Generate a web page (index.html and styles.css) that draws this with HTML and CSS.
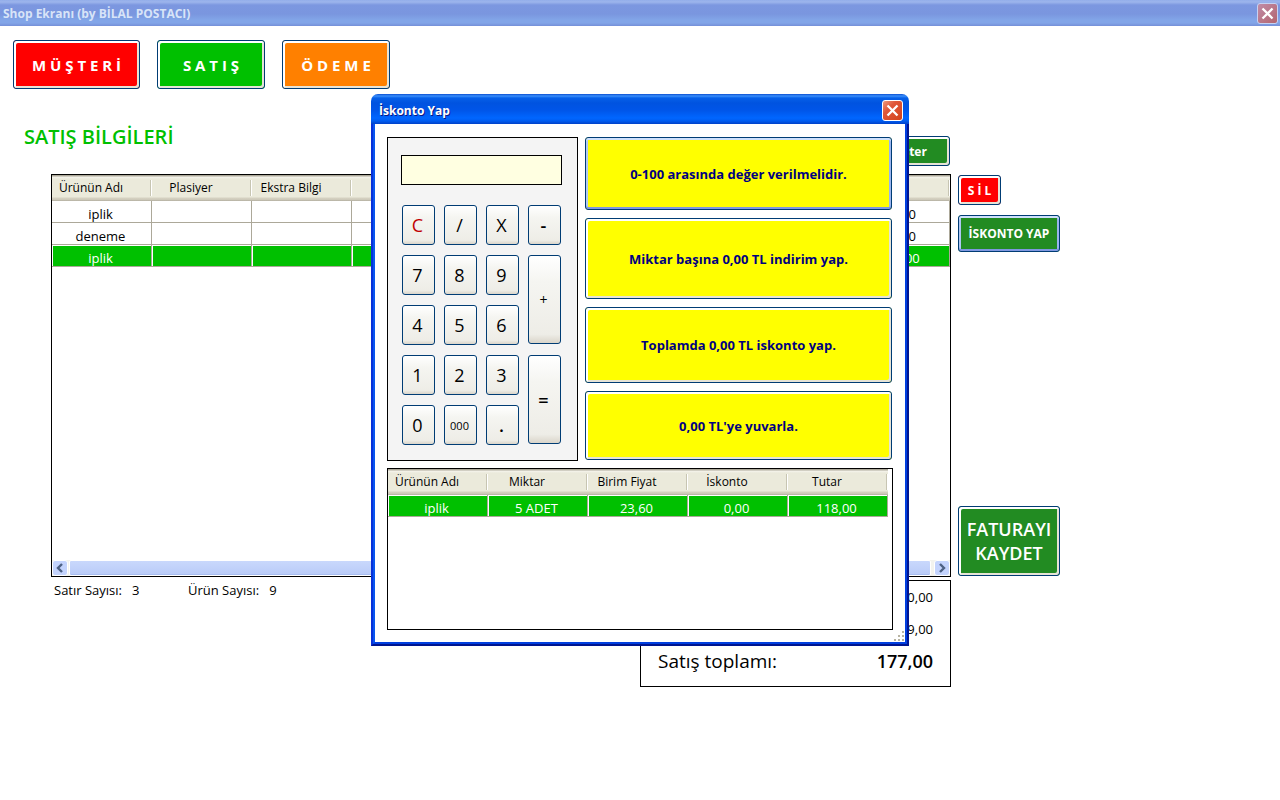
FILE: index.html
```html
<!DOCTYPE html>
<html lang="tr">
<head>
  <meta charset="UTF-8">
  <meta name="viewport" content="width=device-width, initial-scale=1.0">
  <title>Shop Ekranı</title>
  <link rel="stylesheet" href="styles.css">
</head>
<body>

  <header class="titlebar inactive">
    <h1>Shop Ekranı (by BİLAL POSTACI)</h1>
    <button class="close" aria-label="Kapat">
      <svg viewBox="0 0 19 19"><path d="M4.5 4.5l10 10M14.5 4.5l-10 10"/></svg>
    </button>
  </header>

  <main>
    <nav class="tabs">
      <button class="btn red wide">M Ü Ş T E R İ</button>
      <button class="btn green">S A T I Ş</button>
      <button class="btn orange">Ö D E M E</button>
    </nav>

    <div class="sale-head">
      <h2>SATIŞ BİLGİLERİ</h2>
      <button class="btn forest show">Göster</button>
    </div>

    <div class="sale">
      <div class="grid-box">
        <table class="grid">
          <thead>
            <tr><th>Ürünün Adı</th><th>Plasiyer</th><th>Ekstra Bilgi</th><th></th><th></th><th></th><th></th><th></th><th></th></tr>
          </thead>
          <tbody>
            <tr><td>iplik</td><td></td><td></td><td></td><td></td><td></td><td></td><td></td><td>29,50</td></tr>
            <tr><td>deneme</td><td></td><td></td><td></td><td></td><td></td><td></td><td></td><td>29,50</td></tr>
            <tr class="selected"><td>iplik</td><td></td><td></td><td></td><td></td><td></td><td></td><td></td><td>118,00</td></tr>
          </tbody>
        </table>
        <div class="scrollbar">
          <button class="arrow" aria-label="Sola kaydır"><svg viewBox="0 0 14 14"><path d="M9 3L5 7l4 4"/></svg></button>
          <div class="thumb"></div>
          <button class="arrow" aria-label="Sağa kaydır"><svg viewBox="0 0 14 14"><path d="M5 3l4 4-4 4"/></svg></button>
        </div>
      </div>
      <div class="side">
        <button class="btn red delete">S İ L</button>
        <button class="btn forest focused discount">İSKONTO YAP</button>
        <button class="btn forest save">FATURAYI KAYDET</button>
      </div>
    </div>

    <div class="sale-foot">
      <p class="counts"><span>Satır Sayısı:</span><span class="num">3</span><span>Ürün Sayısı:</span><span class="num">9</span></p>
      <div class="totals">
        <p>0,00</p>
        <p>9,00</p>
        <p class="grand"><span>Satış toplamı:</span><strong>177,00</strong></p>
      </div>
    </div>
  </main>

  <section class="dialog" role="dialog" aria-labelledby="dialogTitle">
    <header class="titlebar">
      <h1 id="dialogTitle">İskonto Yap</h1>
      <button class="close" aria-label="Kapat">
        <svg viewBox="0 0 19 19"><path d="M4.5 4.5l10 10M14.5 4.5l-10 10"/></svg>
      </button>
    </header>
    <div class="dialog-frame">
      <div class="dialog-body">
        <div class="dialog-top">
          <div class="calc">
            <input class="display" type="text" aria-label="Değer">
            <div class="keys">
              <button class="key clear">C</button>
              <button class="key">/</button>
              <button class="key">X</button>
              <button class="key bold">-</button>
              <button class="key">7</button>
              <button class="key">8</button>
              <button class="key">9</button>
              <button class="key tall small">+</button>
              <button class="key">4</button>
              <button class="key">5</button>
              <button class="key">6</button>
              <button class="key">1</button>
              <button class="key">2</button>
              <button class="key">3</button>
              <button class="key tall bold">=</button>
              <button class="key">0</button>
              <button class="key tiny">000</button>
              <button class="key bold">.</button>
            </div>
          </div>
          <div class="options">
            <button class="btn yellow focused">0-100 arasında değer verilmelidir.</button>
            <button class="btn yellow">Miktar başına 0,00 TL indirim yap.</button>
            <button class="btn yellow">Toplamda 0,00 TL iskonto yap.</button>
            <button class="btn yellow">0,00 TL'ye yuvarla.</button>
          </div>
        </div>
        <div class="grid-box items">
          <table class="grid">
            <thead>
              <tr><th>Ürünün Adı</th><th>Miktar</th><th>Birim Fiyat</th><th>İskonto</th><th>Tutar</th></tr>
            </thead>
            <tbody>
              <tr class="selected"><td>iplik</td><td>5 ADET</td><td>23,60</td><td>0,00</td><td>118,00</td></tr>
            </tbody>
          </table>
        </div>
        <svg class="grip" viewBox="0 0 12 12"><path d="M9 1h2v2h-2zM5 5h2v2h-2zM9 5h2v2h-2zM1 9h2v2h-2zM5 9h2v2h-2zM9 9h2v2h-2z"/></svg>
      </div>
    </div>
  </section>

</body>
</html>
```
FILE: styles.css
```css
* {
  box-sizing: border-box;
}

body {
  margin: 0;
  min-height: 100vh;
  background: #fff;
  color: #000;
  font-family: "Open Sans", "Noto Sans", sans-serif;
  font-size: 13px;
}

h1, h2, p {
  margin: 0;
}

button, input {
  font-family: inherit;
  padding: 0;
}

/* title bars */
.titlebar {
  display: flex;
  align-items: center;
  justify-content: space-between;
  height: 30px;
  padding: 3px 6px 0 8px;
  border-radius: 7px 7px 0 0;
  background: linear-gradient(#0a4fd0 0, #3b8ffb 2px, #0660e8 4px, #0053e0 9px, #0055e8 16px, #0066ff 24px, #005cf0 27px, #0040c8 30px);
}

.titlebar h1 {
  color: #fff;
  font-size: 12px;
  font-weight: bold;
  text-shadow: 1px 1px 0 #0a1883;
}

.titlebar.inactive {
  height: 26px;
  padding: 0 2px 0 3px;
  border-radius: 0;
  background: linear-gradient(#93aeea 0, #9db5ec 2px, #7c97e0 5px, #7a96df 14px, #82a5e8 20px, #82a5e8 23px, #758fd8 26px);
}

.titlebar.inactive h1 {
  color: #d8e4f8;
  text-shadow: none;
}

.close {
  width: 21px;
  height: 21px;
  border: 1px solid #fff;
  border-radius: 3px;
  background: linear-gradient(135deg, #ee9a7c 0, #e0573a 35%, #d3421a 100%);
}

.close svg {
  display: block;
  width: 19px;
  height: 19px;
  fill: none;
  stroke: #fff;
  stroke-width: 2.3;
}

.inactive .close {
  border-color: #c5d2f3;
  background: linear-gradient(135deg, #c08ca8, #b3656f);
}

/* buttons */
.btn {
  border: 1px solid #003c74;
  border-radius: 3px;
  box-shadow: inset 2px 2px 0 #fff, inset -2px -2px 0 #e6e3d6;
  color: #fff;
  font-size: 12px;
  font-weight: bold;
}

.btn.focused {
  box-shadow: inset 0 2px 0 #cee0fc, inset 0 -2px 0 #7f98e0, inset 2px 0 0 #b0c8f4, inset -2px 0 0 #9ab4ee;
}

.red { background: #ff0000; }
.green { background: #00c000; }
.orange { background: #ff8000; }
.forest { background: #228b22; }

.yellow {
  background: #ffff00;
  color: #000080;
  font-size: 13px;
}

main {
  padding: 14px 13px;
}

.tabs {
  display: flex;
  gap: 17px;
}

.tabs .btn {
  width: 108px;
  height: 49px;
  font-size: 15px;
}

.tabs .wide {
  width: 127px;
}

.sale-head {
  display: flex;
  justify-content: space-between;
  align-items: flex-end;
  max-width: 937px;
  height: 45px;
  margin: 32px 0 8px;
  padding-left: 11px;
}

.sale-head h2 {
  align-self: flex-start;
  color: #00c000;
  font-size: 20px;
  font-weight: 600;
  line-height: 32px;
}

.show {
  width: 86px;
  height: 30px;
}

.sale {
  display: flex;
  gap: 7px;
  margin-left: 38px;
}

/* grids */
.grid-box {
  display: flex;
  flex-direction: column;
  flex: 0 1 900px;
  min-height: 403px;
  border: 1px solid #000;
  background: #fff;
}

.grid {
  width: 100%;
  border-collapse: separate;
  border-spacing: 0;
  table-layout: fixed;
}

.grid th {
  width: 100px;
  height: 26px;
  padding: 0 22px 1px 0;
  background:
    linear-gradient(#c7c5b2, #c7c5b2) right 1px top 5px / 1px 16px no-repeat,
    linear-gradient(#fff, #fff) right 0 top 5px / 1px 16px no-repeat,
    linear-gradient(#aca899 0, #aca899 1px, #f6f4ec 2px, #ebeadb 4px, #ebeadb 22px, #d6d2c2 23px, #cbc7b8 25px, #aca899 26px);
  font-size: 12px;
  font-weight: normal;
  white-space: nowrap;
}

.grid th:last-child {
  width: auto;
}

.grid td {
  height: 22px;
  padding: 4px 2px 0 0;
  border-right: 1px solid #aca899;
  border-bottom: 1px solid #aca899;
  line-height: 16px;
  text-align: center;
}

.grid .selected td {
  background: #00c000;
  box-shadow: inset 1px 1px 0 #fff;
  color: #fff;
}

.scrollbar {
  display: flex;
  height: 16px;
  margin-top: auto;
  background: #f3f3ee;
}

.arrow {
  width: 16px;
  height: 16px;
  border: 1px solid #fff;
  border-radius: 3px;
  background: #c3d3fd;
}

.arrow svg {
  display: block;
  width: 14px;
  height: 14px;
  fill: none;
  stroke: #4d6185;
  stroke-width: 2.4;
}

.thumb {
  flex: 1;
  margin: 0 3px 0 1px;
  border: 1px solid #fff;
  border-radius: 2px;
  background: linear-gradient(#c9d8fc, #b9cbf8);
  box-shadow: inset 0 -1px 0 #a8bdf0;
}

.side {
  display: flex;
  flex-direction: column;
  align-items: flex-start;
  gap: 10px;
  width: 102px;
  padding: 1px 0;
}

.delete {
  width: 43px;
  height: 30px;
}

.discount {
  width: 102px;
  height: 37px;
}

.save {
  width: 102px;
  height: 70px;
  margin-top: auto;
  font-size: 18px;
  font-weight: 600;
  line-height: 24px;
}

.sale-foot {
  display: flex;
  justify-content: space-between;
  align-items: flex-start;
  max-width: 900px;
  margin: 3px 0 0 38px;
}

.counts {
  display: flex;
  gap: 10px;
  padding: 2px 3px;
  line-height: 16px;
}

.counts .num {
  width: 46px;
}

.totals {
  width: 311px;
  padding: 0 17px 9px;
  border: 1px solid #000;
  text-align: right;
}

.totals p {
  line-height: 32px;
}

.totals .grand {
  display: flex;
  justify-content: space-between;
  font-size: 18px;
}

.grand span {
  font-size: 19px;
}

.grand strong {
  font-weight: 600;
}

/* discount dialog, floats over the sale screen */
.dialog {
  position: absolute;
  top: 94px;
  left: calc(50% - 269px);
  width: 538px;
}

.dialog-frame {
  border: 2px solid #0831d9;
  border-top: 0;
  border-right-color: #001590;
  border-bottom-color: #001590;
}

.dialog-body {
  position: relative;
  padding: 13px 12px 12px;
  border: 2px solid #0855f0;
  border-top: 0;
  border-right-color: #003fe0;
  border-bottom-color: #003fe0;
  background: #fff;
}

.dialog-top {
  display: flex;
  gap: 7px;
  margin-bottom: 7px;
}

.calc {
  width: 191px;
  height: 324px;
  padding: 17px 15px 0 13px;
  border: 1px solid #000;
  background: #f4f4f4;
}

.display {
  display: block;
  width: 100%;
  height: 30px;
  padding: 0 6px;
  border: 1px solid #000;
  background: #ffffe1;
  font-size: 16px;
}

.keys {
  display: grid;
  grid-template-columns: repeat(4, 33px);
  grid-auto-rows: 40px;
  gap: 10px 9px;
  margin: 20px 0 0 1px;
}

.key {
  padding-right: 2px;
  border: 1px solid #003c74;
  border-radius: 3px;
  background: linear-gradient(#fff, #f5f5f1 30%, #eeede7 90%, #dad5ca);
  font-size: 18px;
}

.key.tall {
  grid-column: 4;
  grid-row: span 2;
  margin-bottom: 1px;
}

.key.bold { font-weight: 600; }
.key.small { font-size: 14px; }
.key.tiny { font-size: 11px; }
.key.clear { color: #c00000; }

.options {
  display: grid;
  grid-template-rows: 73fr 81fr 76fr 69fr;
  gap: 8px;
  flex: 1;
  padding: 0 1px 1px 0;
}

.items {
  min-height: 162px;
}

.items .grid {
  width: 500px;
}

.items .grid th {
  width: 100px;
}

.grip {
  position: absolute;
  right: 0;
  bottom: 0;
  width: 12px;
  height: 12px;
  fill: #b8b4a2;
}
```
